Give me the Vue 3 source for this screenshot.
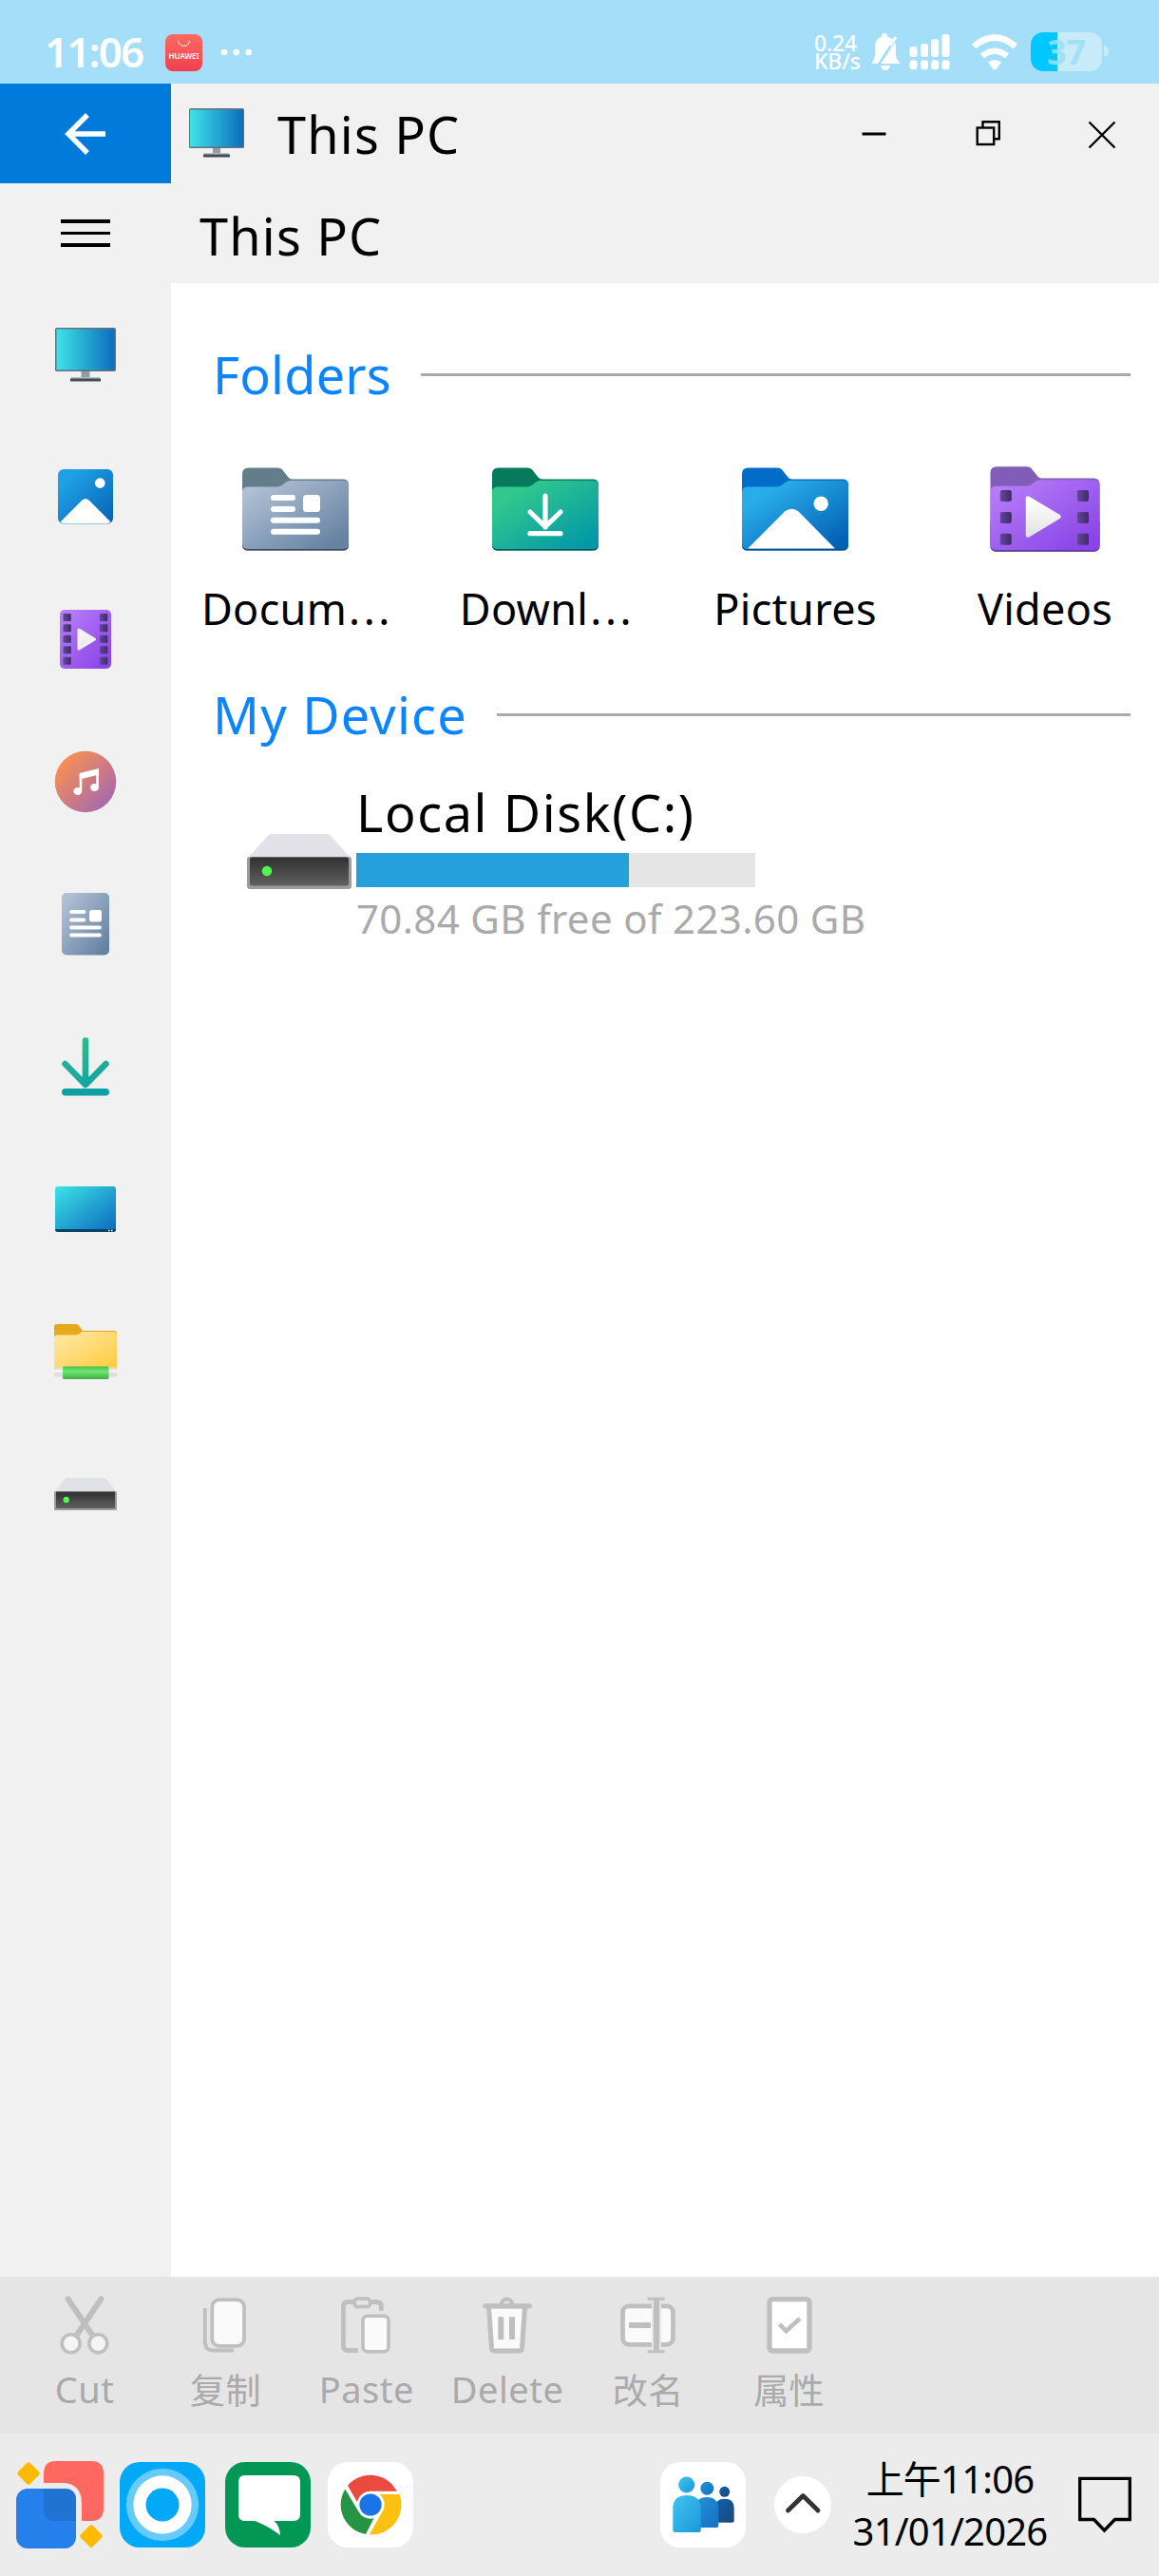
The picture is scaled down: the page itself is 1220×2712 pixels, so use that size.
<template>
  <div class="screen">
    <!-- Shared gradients -->
    <svg class="defs" width="0" height="0">
      <defs>
        <linearGradient id="g-screen" x1="0" y1="0" x2="1" y2="0">
          <stop offset="0" stop-color="#3ee3e6" /><stop offset="1" stop-color="#0d6cbf" />
        </linearGradient>
        <linearGradient id="g-desktop" x1="0" y1="0" x2="1" y2="1">
          <stop offset="0" stop-color="#3ee3e6" /><stop offset="1" stop-color="#0a68bd" />
        </linearGradient>
        <linearGradient id="g-blue" x1="0" y1="0" x2="1" y2="1">
          <stop offset="0.2" stop-color="#1f9fe4" /><stop offset="1" stop-color="#0560b4" />
        </linearGradient>
        <linearGradient id="g-purple" x1="0" y1="0" x2="1" y2="1">
          <stop offset="0.1" stop-color="#b67cf8" /><stop offset="0.9" stop-color="#8a45e6" />
        </linearGradient>
        <linearGradient id="g-hole" x1="0" y1="0" x2="1" y2="0">
          <stop offset="0" stop-color="#61489c" /><stop offset="1" stop-color="#402a66" />
        </linearGradient>
        <linearGradient id="g-play" x1="0" y1="0" x2="0" y2="1">
          <stop offset="0" stop-color="#ffffff" /><stop offset="1" stop-color="#e3e3e3" />
        </linearGradient>
        <linearGradient id="g-music" x1="0" y1="0" x2="1" y2="1">
          <stop offset="0.15" stop-color="#f68f56" /><stop offset="0.9" stop-color="#a468b0" />
        </linearGradient>
        <linearGradient id="g-doc" x1="0" y1="0" x2="1" y2="1">
          <stop offset="0.1" stop-color="#b0c0d4" /><stop offset="0.9" stop-color="#6682a2" />
        </linearGradient>
        <linearGradient id="g-download" gradientUnits="userSpaceOnUse" x1="20" y1="5" x2="40" y2="66">
          <stop offset="0" stop-color="#2bbf8e" /><stop offset="1" stop-color="#0f9fa3" />
        </linearGradient>
        <linearGradient id="g-green" x1="0" y1="0" x2="1" y2="1">
          <stop offset="0.2" stop-color="#31c78d" /><stop offset="0.92" stop-color="#0198a8" />
        </linearGradient>
        <linearGradient id="g-pictures" x1="0" y1="0" x2="1" y2="1">
          <stop offset="0.2" stop-color="#28ade9" /><stop offset="0.9" stop-color="#0462b5" />
        </linearGradient>
        <linearGradient id="g-yellow" x1="0" y1="0" x2="1" y2="1">
          <stop offset="0.1" stop-color="#ffe7a0" /><stop offset="1" stop-color="#ffcb3d" />
        </linearGradient>
        <linearGradient id="g-pipe" x1="0" y1="0" x2="0" y2="1">
          <stop offset="0" stop-color="#4dbb4c" /><stop offset="0.4" stop-color="#6ce873" /><stop offset="1" stop-color="#43ad43" />
        </linearGradient>
        <linearGradient id="g-drive" x1="0" y1="0" x2="0" y2="1">
          <stop offset="0" stop-color="#303030" /><stop offset="1" stop-color="#606060" />
        </linearGradient>
        <linearGradient id="g-huawei" x1="0" y1="0" x2="0" y2="1">
          <stop offset="0" stop-color="#ff6b61" /><stop offset="1" stop-color="#ee3f51" />
        </linearGradient>
        <linearGradient id="g-p1" x1="0" y1="0" x2="1" y2="1">
          <stop offset="0" stop-color="#40c4ee" /><stop offset="1" stop-color="#1b98dc" />
        </linearGradient>
        <linearGradient id="g-p2" x1="0" y1="0" x2="1" y2="1">
          <stop offset="0" stop-color="#2393d6" /><stop offset="1" stop-color="#1470c4" />
        </linearGradient>
        <linearGradient id="g-p3" x1="0" y1="0" x2="1" y2="1">
          <stop offset="0" stop-color="#0b62ad" /><stop offset="1" stop-color="#21467a" />
        </linearGradient>
      </defs>
    </svg>

    <!-- Status bar -->
    <div class="status-bar">
      <span class="status-time">11:06</span>
      <span class="huawei">
        <svg width="39" height="39" viewBox="0 0 39 39">
          <rect width="39" height="39" rx="8" fill="url(#g-huawei)" />
          <path d="M13.5 6.5a6 6 0 0 0 12 0" fill="none" stroke="#fff" stroke-width="1" />
        </svg>
        <span class="huawei-name">HUAWEI</span>
      </span>
      <svg class="dots" width="34" height="8" viewBox="0 0 34 8" fill="#fff">
        <circle cx="4" cy="4" r="3.3" /><circle cx="16.7" cy="4" r="3.3" /><circle cx="29.7" cy="4" r="3.3" />
      </svg>
      <div class="speed"><span>0.24</span><span>KB/s</span></div>
      <svg class="bell" width="34" height="40" viewBox="0 0 34 40">
        <path fill="#fff" d="M15 0q3 0 3.200 3.400Q27 6 27 15v7q0 5 5 10H1q4-4 4-10v-7Q5 6 11.800 3.400 12 0 15 0zM11 34h10q-1 5-5 5t-5-5z" />
        <path d="M29 2L9 33" stroke="#a4def8" stroke-width="3" />
        <path d="M27 4L21 13" stroke="#fff" stroke-width="3" />
      </svg>
      <svg class="signal" width="49" height="38" viewBox="0 0 49 38" fill="#fff">
        <rect v-for="bar in signalBars" :key="bar.x" :x="bar.x" :y="bar.y" width="8" :height="24 - bar.y" rx="3" />
        <rect v-for="bar in signalBars" :key="bar.x" :x="bar.x" y="27.300" width="8" height="10" rx="3" />
      </svg>
      <svg class="wifi" width="50" height="38" viewBox="0 0 50 38">
        <path d="M3 13q22-19 44 0M12 23q13-10.500 26 0" fill="none" stroke="#fff" stroke-width="6.500" />
        <path d="M18 29.500q7-5 14 0l-5 7q-2 2-4 0z" fill="#fff" />
      </svg>
      <div class="battery">
        <div class="battery-level" :style="{ width: batteryLevel + '%' }"></div>
        <span class="battery-text">{{ batteryLevel }}</span>
      </div>
      <span class="battery-nub"></span>
    </div>

    <!-- Window -->
    <div class="window">
      <aside class="sidebar">
        <button class="back">
          <svg width="44" height="44" viewBox="0 0 44 44" fill="none" stroke="#fff" stroke-width="5.500">
            <path d="M43 22H5M24 2L4 22l20 20" />
          </svg>
        </button>
        <button class="menu"><i></i><i></i><i></i></button>

        <div class="side-item">
          <svg width="70" height="70" viewBox="0 0 70 70">
            <rect x="3" y="7" width="64" height="46" rx="2" fill="#63727a" />
            <rect x="4.500" y="8.500" width="61" height="43" rx="1" fill="url(#g-screen)" />
            <path d="M30.500 53h9v7h-9z" fill="#939ca4" />
            <path d="M20 59h30v2H20z" fill="#b4bfc9" /><path d="M19 60.500h32v3H19z" fill="#434a51" />
          </svg>
        </div>
        <div class="side-item">
          <svg width="70" height="70" viewBox="0 0 70 70">
            <rect x="6" y="6" width="58" height="57.500" rx="6" fill="url(#g-blue)" />
            <path d="M8.500 61.500L31 39q4-4 8 0l22.500 22.500q-2 1.700-4 1.700h-45q-2 0-4-1.700z" fill="#fff" />
            <circle cx="50.300" cy="20.600" r="5.300" fill="#fff" />
          </svg>
        </div>
        <div class="side-item">
          <svg width="70" height="70" viewBox="0 0 70 70">
            <rect x="8" y="4" width="54" height="62" rx="5" fill="url(#g-purple)" />
            <template v-for="y in [8, 19.3, 30.8, 42.3, 53.8]" :key="y">
              <rect x="11.500" :y="y" width="8.300" height="8" rx="1" fill="url(#g-hole)" />
              <rect x="50" :y="y" width="8.300" height="8" rx="1" fill="url(#g-hole)" />
            </template>
            <path d="M28 25v20l16.500-10z" fill="url(#g-play)" stroke="#f1f1f1" stroke-width="3" stroke-linejoin="round" />
          </svg>
        </div>
        <div class="side-item">
          <svg width="70" height="70" viewBox="0 0 70 70">
            <circle cx="35" cy="35" r="32.300" fill="url(#g-music)" />
            <path d="M30 45V27.500l17.500-4.300v18" fill="none" stroke="#fff" stroke-width="2.600" />
            <path d="M28.700 26l20.200-5v6.500L28.700 32.500z" fill="#fff" />
            <ellipse cx="26.800" cy="45" rx="4.400" ry="4" fill="#fff" /><ellipse cx="44.500" cy="41" rx="4.400" ry="4" fill="#fff" />
          </svg>
        </div>
        <div class="side-item">
          <svg width="70" height="70" viewBox="0 0 70 70">
            <rect x="10" y="2" width="50" height="65.500" rx="5" fill="url(#g-doc)" />
            <path d="M20 22h13.500M20 30.500h13.500M20 38.500h30M20 46.500h30" stroke="#fff" stroke-width="3.800" stroke-linecap="round" />
            <rect x="39" y="20" width="13" height="12.500" rx="2.500" fill="#fff" />
          </svg>
        </div>
        <div class="side-item">
          <svg width="70" height="70" viewBox="0 0 70 70">
            <path d="M35 7.500V52M13.500 32L35 54l21.500-22" fill="none" stroke="url(#g-download)" stroke-width="6.600" stroke-linecap="round" stroke-linejoin="round" />
            <rect x="10" y="58" width="50" height="7.500" rx="3.700" fill="#10a0a3" />
          </svg>
        </div>
        <div class="side-item">
          <svg width="70" height="70" viewBox="0 0 70 70">
            <rect x="3" y="11" width="64" height="48" rx="3" fill="url(#g-desktop)" />
            <path d="M3 56h64q0 3-3 3H6q-3 0-3-3z" fill="#0c3f66" />
            <path d="M59 57.500h1.500M62 57.500h1.500" stroke="#fff" stroke-width="1.500" />
          </svg>
        </div>
        <div class="side-item">
          <svg width="70" height="70" viewBox="0 0 70 70">
            <path d="M2 19V9q0-3 3-3h20q2 0 3 1.500l4 5.500h33q3 0 3 3v10H2z" fill="#e5a91d" />
            <path d="M2 21q0-3.500 3-3.500h20q3 0 6-3.500h34q3 0 3 3v36H2z" fill="url(#g-yellow)" />
            <rect x="2" y="51.500" width="66" height="10" rx="1.500" fill="#dedede" /><path d="M2 54h66v3H2z" fill="#f7f3ea" />
            <rect x="11" y="50.500" width="48.500" height="13.500" rx="1.500" fill="url(#g-pipe)" />
          </svg>
        </div>
        <div class="side-item">
          <svg width="70" height="70" viewBox="0 0 70 70">
            <path d="M2 33L13 19q1-1 3-1h38q2 0 3 1l11 14z" fill="#e1e2e7" />
            <rect x="2" y="32" width="66" height="20" rx="1.500" fill="#9b9b9b" />
            <rect x="4" y="32.500" width="62" height="17.500" rx="1" fill="url(#g-drive)" />
            <circle cx="14.700" cy="41" r="3.200" fill="#4cfb4c" />
          </svg>
        </div>
      </aside>

      <main class="main">
        <header class="title-bar">
          <svg width="58" height="53" viewBox="0 0 58 53">
            <rect x="0" y="0" width="58" height="42" rx="1.500" fill="#63727a" />
            <rect x="1" y="1.500" width="56" height="39" fill="url(#g-screen)" />
            <path d="M25 42h8v6h-8z" fill="#939ca4" />
            <path d="M15.500 47h26v2h-26z" fill="#b4bfc9" /><path d="M15 48.500h28v3H15z" fill="#434a51" />
          </svg>
          <h1>{{ title }}</h1>
          <div class="controls">
            <button>
              <svg width="30" height="30" viewBox="0 0 30 30"><path d="M2.500 15h25" stroke="#000" stroke-width="3" /></svg>
            </button>
            <button>
              <svg width="30" height="30" viewBox="0 0 30 30" fill="none" stroke="#000" stroke-width="2.400">
                <path d="M9.500 8V2.200h17.300v18H22" /><rect x="3.700" y="8.500" width="17.500" height="17.500" />
              </svg>
            </button>
            <button>
              <svg width="30" height="30" viewBox="0 0 30 30"><path d="M1.500 2.500l27 27M28.500 2.500l-27 27" stroke="#000" stroke-width="2.300" /></svg>
            </button>
          </div>
        </header>
        <div class="path-bar">{{ title }}</div>

        <section class="content">
          <div class="section-head folders-head"><h2>Folders</h2><hr /></div>
          <div class="folders">
            <div v-for="folder in folders" :key="folder.id" class="folder">
              <svg width="120" height="96" viewBox="0 0 120 96">
                <g :transform="folder.id === 'videos' ? 'translate(-1.6 -1.3) scale(1.027)' : ''">
                  <path :fill="folder.back" d="M4 10q0-6.500 6.500-6.500H41q4 0 6 3l5.500 7q1.500 2 4 2H110q6 0 6 6V84.500q0 6-6 6H10q-6 0-6-6z" />
                  <path :fill="folder.edge" d="M4 60H116V84.500q0 6-6 6H10q-6 0-6-6z" />
                  <path :fill="folder.front" d="M4 29q0-5.500 6-5.500H40c8 0 8-6.500 16-6.500H110q6 0 6 6V83q0 6-6 6H10q-6 0-6-6z" />
                </g>
                <g v-if="folder.id === 'documents'">
                  <path d="M37 35h20M37 47h20M37 58.700h46M37 70.700h46" stroke="#fff" stroke-width="6" stroke-linecap="round" />
                  <rect x="68" y="32" width="18" height="18" rx="3.500" fill="#fff" />
                </g>
                <path
                  v-else-if="folder.id === 'downloads'"
                  d="M60 33v33M44 50l16 15.500L76 50M44 72.700h32"
                  fill="none" stroke="#fff" stroke-width="5.200" stroke-linecap="round" stroke-linejoin="round"
                />
                <g v-else-if="folder.id === 'pictures'" fill="#fff">
                  <circle cx="87.200" cy="41.300" r="7.700" />
                  <path d="M10.200 88.500L49 49.500q7.500-5.500 14.500 0l38.500 39z" />
                </g>
                <g v-else>
                  <template v-for="y in [27, 50, 72.7]" :key="y">
                    <rect x="12.800" :y="y" width="12" height="12" rx="2" fill="url(#g-hole)" />
                    <rect x="94" :y="y" width="12" height="12" rx="2" fill="url(#g-hole)" />
                  </template>
                  <path d="M42 35.500v39L74.500 55z" fill="url(#g-play)" stroke="url(#g-play)" stroke-width="4.500" stroke-linejoin="round" />
                </g>
              </svg>
              <span class="folder-name">{{ folder.name }}<span v-if="folder.cut" class="cut">...</span></span>
            </div>
          </div>

          <div class="section-head device-head"><h2>My Device</h2><hr /></div>
          <div class="disk">
            <svg width="110" height="60" viewBox="0 0 110 60">
              <path d="M1 26L21 4q2-3 5-3h58q3 0 5 3l20 22z" fill="#e1e2e7" />
              <rect x="0" y="25" width="110" height="34" rx="3" fill="#9b9b9b" />
              <rect x="3" y="25.500" width="104" height="30" rx="2.500" fill="url(#g-drive)" />
              <circle cx="21" cy="40" r="5.200" fill="#4cfb4c" />
            </svg>
            <div class="disk-info">
              <div class="disk-name">Local Disk(C:)</div>
              <div class="disk-bar"><div class="disk-used" :style="{ width: usedPercent + '%' }"></div></div>
              <div class="disk-free">{{ disk.free.toFixed(2) }} GB free of {{ disk.size.toFixed(2) }} GB</div>
            </div>
          </div>
        </section>
      </main>
    </div>

    <!-- File actions -->
    <div class="toolbar">
      <div class="action">
        <svg width="70" height="70" viewBox="0 0 70 70" fill="none" stroke="#bfbfbf">
          <path d="M17.500 7.300L45 48M52.500 7.300L25 48" stroke-width="6" stroke-linecap="round" />
          <circle cx="20.700" cy="54.300" r="9.500" fill="#f5f5f5" stroke-width="3.600" /><circle cx="49.300" cy="54.300" r="9.500" fill="#f5f5f5" stroke-width="3.600" />
        </svg>
        <span>Cut</span>
      </div>
      <div class="action">
        <svg width="70" height="70" viewBox="0 0 70 70" fill="none" stroke="#bfbfbf" stroke-width="3.800">
          <path d="M13.800 17v35.500q0 9 9 9H44" />
          <rect x="21.300" y="8.200" width="33.700" height="48.700" rx="7.500" fill="#fafafa" />
        </svg>
        <span class="cjk">复制</span>
      </div>
      <div class="action">
        <svg width="70" height="70" viewBox="0 0 70 70" fill="none" stroke="#bfbfbf" stroke-width="3.600">
          <path d="M21 10.500H15q-4.500 0-4.500 4.500v42q0 4.500 4.500 4.500h10.700M40 10.500h5.500q4.800 0 4.800 4.500v4.700" stroke-width="4.800" />
          <rect x="22.300" y="7" width="16" height="8.500" rx="2.500" />
          <rect x="31" y="25.200" width="27" height="37.500" rx="5" fill="#fafafa" />
        </svg>
        <span>Paste</span>
      </div>
      <div class="action">
        <svg width="70" height="70" viewBox="0 0 70 70" fill="none" stroke="#bfbfbf" stroke-width="5">
          <path d="M15.500 15l3 44q.3 3 3 3h26q2.700 0 3-3l3-44z" fill="#fafafa" />
          <path d="M28.500 13q1.500-5.500 6-5.500t6 5.500" stroke-width="4" /><path d="M11.500 14.700h47" stroke-linecap="round" />
          <path d="M28.300 26.300V50M40 26.300V50" stroke-width="6" />
        </svg>
        <span>Delete</span>
      </div>
      <div class="action">
        <svg width="70" height="70" viewBox="0 0 70 70" fill="none" stroke="#bfbfbf">
          <rect x="8.500" y="14.800" width="53" height="40.500" rx="6.500" fill="#fafafa" stroke-width="4.800" />
          <path d="M44 12v46" stroke="#e5e5e5" stroke-width="10" />
          <path d="M44 7v56" stroke-width="6" /><path d="M34.700 7.300h18M34.700 62.700h18" stroke-width="3" /><path d="M15 35h23" stroke-width="6" />
        </svg>
        <span class="cjk">改名</span>
      </div>
      <div class="action">
        <svg width="70" height="70" viewBox="0 0 70 70" fill="none" stroke="#bfbfbf">
          <rect x="14" y="7.700" width="42" height="54.300" rx="3" fill="#fff" stroke-width="5.300" />
          <path d="M24.500 33.800l7 7.200L46 28" stroke-width="4.600" />
        </svg>
        <span class="cjk">属性</span>
      </div>
    </div>

    <!-- Taskbar -->
    <footer class="taskbar">
      <svg class="start" width="92" height="92" viewBox="0 0 92 92">
        <path d="M29 13Q29 0 42 0h37q13 0 13 13v37q0 13-13 13H69V44c0-13-7-21-20-21H29z" fill="#ff6860" />
        <rect x="0" y="29" width="63" height="63" rx="12" fill="#2580ec" />
        <path d="M29 29h22q12 0 12 12v22H41q-12 0-12-12z" fill="#2173d3" />
        <rect x="4" y="4" width="18" height="18" rx="2.500" fill="#fcba03" transform="rotate(45 13 13)" />
        <rect x="70" y="70" width="18" height="18" rx="2.500" fill="#fcba03" transform="rotate(45 79 79)" />
      </svg>
      <svg class="cortana" width="90" height="90" viewBox="0 0 90 90">
        <rect width="90" height="90" rx="21" fill="#03a8f6" />
        <circle cx="45" cy="45" r="38.200" fill="#66cbfa" /><circle cx="45" cy="45" r="30.700" fill="#fff" /><circle cx="45" cy="45" r="17.500" fill="#03a8f6" />
      </svg>
      <svg class="chat" width="90" height="90" viewBox="0 0 90 90">
        <rect width="90" height="90" rx="21" fill="#039755" />
        <path d="M21 14h51q7 0 7 7v34q0 7-7 7H51.500q6 5 6.500 15Q43 66 31 62H21q-7 0-7-7V21q0-7 7-7z" fill="#fff" />
      </svg>
      <svg class="chrome" width="90" height="90" viewBox="0 0 90 90">
        <rect width="90" height="90" rx="21" fill="#fff" />
        <path d="M21 24.700A31.500 31.500 0 0 1 72.700 30.700H45A14.300 14.300 0 0 0 31 42.300z" fill="#ea4a3f" />
        <path d="M18.300 28.500L32 51.500A14.300 14.300 0 0 0 48.500 59.200L40 76A31.500 31.500 0 0 1 18.300 28.500z" fill="#259443" />
        <path d="M75.500 34A31.500 31.500 0 0 1 43.700 76.400L56.500 54A14.300 14.300 0 0 0 54.500 34z" fill="#fbc011" />
        <circle cx="45" cy="45" r="11.600" fill="#1b73e8" />
      </svg>
      <svg class="people" width="90" height="90" viewBox="0 0 90 90">
        <rect width="90" height="90" rx="21" fill="#fff" />
        <circle cx="67.700" cy="31.300" r="5.500" fill="url(#g-p3)" />
        <path d="M58 48q0-9.300 9.800-9.300t9.900 9.300v14q0 1.700-1.700 1.700H58z" fill="url(#g-p3)" />
        <circle cx="49.300" cy="27.700" r="7" fill="url(#g-p2)" />
        <path d="M37 49q0-12 12-12t12.300 12v18q0 2-2 2H37z" fill="url(#g-p2)" />
        <circle cx="27.700" cy="24" r="8.500" fill="url(#g-p1)" />
        <path d="M13.300 49q0-14 14.700-14t14.700 14v23q0 2-2 2H15.300q-2 0-2-2z" fill="url(#g-p1)" />
      </svg>
      <svg class="chevron" width="60" height="60" viewBox="0 0 60 60">
        <circle cx="30" cy="30" r="30" fill="#fff" />
        <path d="M14.500 36l15.800-15.500L46 36" fill="none" stroke="#333" stroke-width="4.800" stroke-linecap="round" stroke-linejoin="round" />
      </svg>
      <div class="clock"><span>上午11:06</span><span>31/01/2026</span></div>
      <svg class="notify" width="56" height="60" viewBox="0 0 56 60">
        <path d="M1.700 2.300h52.600v43.200H38.500L27.500 57 16.500 45.500H1.700z" fill="none" stroke="#000" stroke-width="3.300" />
      </svg>
    </footer>
  </div>
</template>

<script setup>
import { ref, computed } from 'vue'

const title = ref('This PC')
const batteryLevel = ref(37)

const signalBars = [
  { x: 0.5, y: 13 },
  { x: 12, y: 10 },
  { x: 23.2, y: 5.3 },
  { x: 34.5, y: 0 }
]

const folders = ref([
  { id: 'documents', name: 'Docum', cut: true, back: '#647d8b', edge: '#3b4a5e', front: 'url(#g-doc)' },
  { id: 'downloads', name: 'Downl', cut: true, back: '#067a5b', edge: '#0b565c', front: 'url(#g-green)' },
  { id: 'pictures', name: 'Pictures', back: '#026dc9', edge: '#0c4c91', front: 'url(#g-pictures)' },
  { id: 'videos', name: 'Videos', back: '#815db9', edge: '#60409c', front: 'url(#g-purple)' }
])

const disk = ref({ free: 70.84, size: 223.6 })

const usedPercent = computed(() =>
  ((disk.value.size - disk.value.free) / disk.value.size) * 100
)
</script>

<style>
body {
  margin: 0;
}
</style>

<style scoped>
.screen {
  display: flex;
  flex-direction: column;
  width: 1220px;
  height: 2712px;
  overflow: hidden;
  background: #fff;
  color: #000;
  font-family: "Noto Sans", "Noto Sans CJK SC", sans-serif;
}

.defs {
  position: absolute;
}

svg {
  display: block;
  flex-shrink: 0;
}

button {
  display: flex;
  align-items: center;
  justify-content: center;
  padding: 0;
  border: 0;
  background: none;
}

h1,
h2 {
  margin: 0;
  font-size: 54px;
  font-weight: 400;
  white-space: nowrap;
}

/* Status bar */
.status-bar {
  display: flex;
  align-items: flex-start;
  height: 88px;
  background: #a4def8;
  color: #fff;
}

.status-time {
  width: 127px;
  margin-left: 47px;
  padding-top: 24px;
  font-size: 44px;
  font-weight: 600;
  line-height: 60px;
  letter-spacing: -1.9px;
}

.huawei {
  position: relative;
  margin-top: 36px;
}

.huawei-name {
  position: absolute;
  top: 18px;
  left: 0;
  width: 39px;
  font-size: 8px;
  font-weight: 600;
  line-height: 10px;
  text-align: center;
}

.dots {
  margin: 51px 0 0 19px;
}

.speed {
  display: flex;
  flex-direction: column;
  width: 59px;
  margin: 36px 0 0 591px;
  font-size: 23px;
  font-weight: 500;
  line-height: 19px;
  letter-spacing: -0.2px;
}

.bell {
  margin-top: 35px;
}

.signal {
  margin: 36px 0 0 7px;
}

.wifi {
  margin: 36px 0 0 16px;
}

.battery {
  position: relative;
  width: 75px;
  height: 41px;
  margin: 34px 0 0 13px;
  border-radius: 13px;
  background: #c8ebfa;
}

.battery-level {
  height: 100%;
  border-radius: 13px 0 0 13px;
  background: #00c8ff;
}

.battery-text {
  position: absolute;
  inset: 0;
  color: rgba(155, 221, 248, 0.85);
  font-size: 36px;
  font-weight: 700;
  line-height: 41px;
  text-align: center;
}

.battery-nub {
  width: 5px;
  height: 12px;
  margin: 48px 0 0 2px;
  border-radius: 0 6px 6px 0;
  background: #c8ebfa;
}

/* Window */
.window {
  display: flex;
  height: 2309px;
}

.sidebar {
  flex-shrink: 0;
  width: 180px;
  background: #f1f1f1;
}

.back {
  width: 180px;
  height: 105px;
  background: #007bdb;
}

.menu {
  flex-direction: column;
  gap: 9px;
  width: 180px;
  height: 105px;
}

.menu i {
  width: 52px;
  height: 3.5px;
  background: #000;
}

.side-item {
  display: flex;
  align-items: center;
  justify-content: center;
  height: 150px;
}

.main {
  flex: 1;
  min-width: 0;
}

.title-bar {
  display: flex;
  align-items: center;
  height: 105px;
  padding-left: 19px;
  background: #f1f1f1;
}

h1 {
  margin-left: 35px;
  letter-spacing: 1.2px;
}

.controls {
  display: flex;
  margin-left: auto;
}

.controls button {
  width: 120px;
  height: 105px;
}

.path-bar {
  height: 105px;
  padding-left: 30px;
  background: #f1f1f1;
  font-size: 54px;
  line-height: 111px;
  letter-spacing: 1.2px;
}

.content {
  padding-top: 56px;
}

.section-head {
  display: flex;
  align-items: center;
  height: 80px;
  padding: 0 30px 0 44px;
}

.section-head h2 {
  color: #0a84ff;
}

.section-head hr {
  flex: 1;
  height: 3px;
  margin: 0 0 0 31px;
  border: 0;
  background: #a9a9a9;
}

.folders-head h2 {
  letter-spacing: 0.2px;
}

.device-head h2 {
  letter-spacing: 1.2px;
}

.folders {
  display: grid;
  grid-template-columns: repeat(3, 263px) 251px;
  height: 278px;
}

.folder {
  display: flex;
  flex-direction: column;
  align-items: center;
  width: 262px;
  padding-top: 55px;
}

.folder-name {
  margin-top: 26px;
  font-size: 45px;
  line-height: 60px;
  letter-spacing: 0.3px;
  white-space: nowrap;
}

.cut {
  margin-left: 2px;
  margin-right: -4px;
  letter-spacing: 3.6px;
}

.disk {
  display: flex;
  padding: 30px 0 0 80px;
}

.disk > svg {
  margin-top: 55px;
}

.disk-info {
  margin-left: 5px;
}

.disk-name {
  font-size: 54px;
  line-height: 66px;
  letter-spacing: 1.6px;
}

.disk-bar {
  width: 420px;
  height: 36px;
  margin-top: 10px;
  background: #e5e5e5;
}

.disk-used {
  height: 100%;
  background: #25a0da;
}

.disk-free {
  color: #aaa;
  font-size: 42px;
  line-height: 66px;
  letter-spacing: 0.35px;
}

/* File actions */
.toolbar {
  display: flex;
  height: 165px;
  padding-left: 15px;
  background: #e5e5e5;
}

.action {
  display: flex;
  flex-direction: column;
  align-items: center;
  width: 148.3px;
  padding-top: 16px;
  color: #aaa;
  font-size: 38px;
}

.action span {
  margin-top: 8px;
  line-height: 48px;
  letter-spacing: 0.5px;
}

.action .cjk {
  margin-top: 10px;
  font-size: 37px;
}

/* Taskbar */
.taskbar {
  display: flex;
  align-items: center;
  height: 150px;
  background: #ececec;
}

.start {
  margin-left: 17px;
}

.cortana {
  margin-left: 17px;
}

.chat {
  margin-left: 21px;
}

.chrome {
  margin-left: 18px;
}

.people {
  margin-left: 260px;
}

.chevron {
  margin-left: 30px;
}

.clock {
  display: flex;
  flex-direction: column;
  align-items: center;
  width: 240px;
  margin-left: 5px;
  font-size: 40px;
  line-height: 55px;
  letter-spacing: -0.8px;
}

.notify {
  margin-left: 15px;
}
</style>
